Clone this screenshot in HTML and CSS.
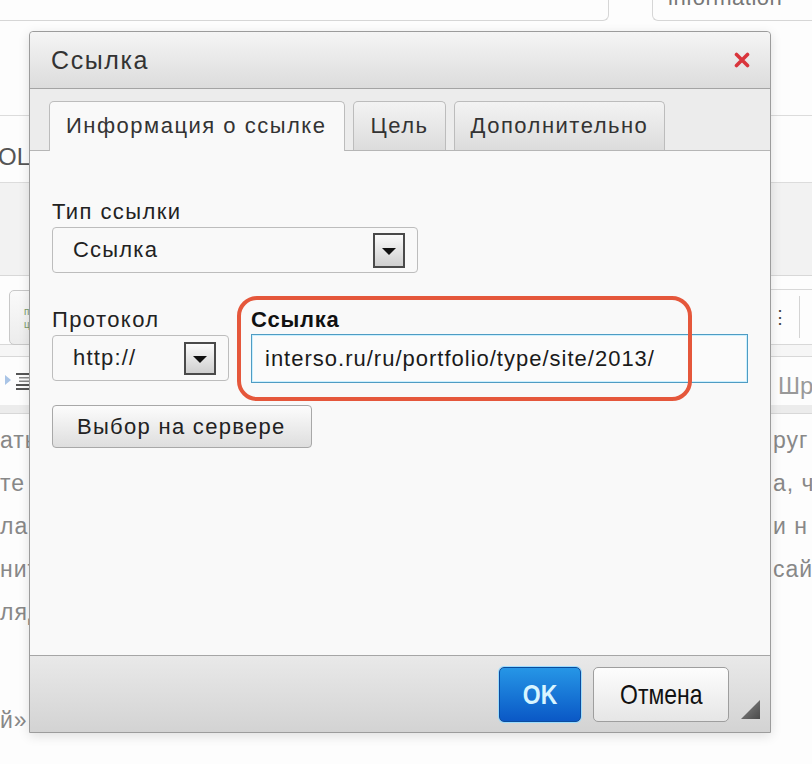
FILE: index.html
```html
<!DOCTYPE html>
<html lang="ru">
<head>
  <meta charset="UTF-8" />
  <title>Ссылка</title>
  <link rel="stylesheet" href="styles.css">
</head>
<body>

  <div class="page">
    <div class="topbar">
      <div class="top-left"></div>
      <div class="top-right"><span>information</span></div>
    </div>

    <div class="sec-title"><span>OL</span></div>
    <div class="sec-gray"></div>

    <div class="toolbar">
      <div class="tool-btn"><span>п<br>ц</span></div>
      <div class="tool-right">
        <span class="tool-dots">⋮</span>
        <span class="tool-sep"></span>
      </div>
    </div>
    <div class="sec-strip"></div>
    <div class="toolbar2">
      <svg class="tool-icon" width="26" height="22" viewBox="0 0 26 22">
        <path d="M1 5 L7 10 L1 15 Z" fill="#a9c4e6"/>
        <rect x="12" y="3" width="13" height="2" fill="#555"/>
        <rect x="15" y="7" width="10" height="1.5" fill="#888"/>
        <rect x="15" y="10.5" width="10" height="1.5" fill="#888"/>
        <rect x="12" y="14" width="13" height="2" fill="#555"/>
        <rect x="12" y="18" width="13" height="2" fill="#555"/>
      </svg>
      <span class="tool-font">Шр</span>
    </div>
    <div class="sec-band"></div>

    <div class="text">
      <div class="line"><span class="l">ать</span><span class="r">руг с</span></div>
      <div class="line"><span class="l">те</span><span class="r">а, ч</span></div>
      <div class="line"><span class="l">ла</span><span class="r"> и н</span></div>
      <div class="line"><span class="l">нит</span><span class="r">сай</span></div>
      <div class="line"><span class="l">ляд</span><span class="r"></span></div>
      <div class="line para"><span class="l">й»</span><span class="r"></span></div>
    </div>
  </div>

  <div class="dialog">
    <div class="dlg-head">
      <span class="dlg-title">Ссылка</span>
      <svg class="dlg-close" width="16" height="16" viewBox="0 0 16 16">
        <path d="M2.5 2.5 L13.5 13.5 M13.5 2.5 L2.5 13.5" stroke="#d9353c" stroke-width="3.6" stroke-linecap="round"/>
      </svg>
    </div>

    <div class="dlg-tabs">
      <div class="tab active">Информация о ссылке</div>
      <div class="tab">Цель</div>
      <div class="tab">Дополнительно</div>
    </div>

    <div class="dlg-body">
      <div class="field-label">Тип ссылки</div>
      <div class="select select-type">
        <span>Ссылка</span>
        <span class="select-arrow"></span>
      </div>

      <div class="row">
        <div class="col-proto">
          <div class="field-label">Протокол</div>
          <div class="select select-proto">
            <span>http://</span>
            <span class="select-arrow"></span>
          </div>
        </div>
        <div class="col-url">
          <div class="field-label bold">Ссылка</div>
          <div class="url-input">interso.ru/ru/portfolio/type/site/2013/</div>
          <div class="highlight"></div>
        </div>
      </div>

      <div class="btn-browse">Выбор на сервере</div>
    </div>

    <div class="dlg-foot">
      <div class="btn btn-ok"><span>OK</span></div>
      <div class="btn btn-cancel"><span>Отмена</span></div>
      <div class="grip"></div>
    </div>
  </div>

</body>
</html>
```

FILE: styles.css
```css
body {
  margin: 0;
  font-family: 'Liberation Sans', Arial, sans-serif;
  background-color: #fdfdfd;
  color: #222;
  width: 812px;
  height: 764px;
  overflow: hidden;
  position: relative;
}

/* page behind the dialog */
.page {
  width: 812px;
  color: #888;
}

.topbar {
  display: flex;
  justify-content: space-between;
  height: 21px;
}

.top-left {
  width: 609px;
  border-right: 1px solid #d6d6d6;
  border-bottom: 1px solid #d6d6d6;
  border-bottom-right-radius: 6px;
  box-sizing: border-box;
}

.top-right {
  width: 160px;
  border-left: 1px solid #d6d6d6;
  border-bottom: 1px solid #d6d6d6;
  border-bottom-left-radius: 6px;
  box-sizing: border-box;
  overflow: hidden;
  padding-left: 15px;
}

.top-right span {
  display: block;
  margin-top: -14px;
  font-size: 22px;
  line-height: 24px;
  color: #777;
  letter-spacing: 0.5px;
}

.sec-title {
  margin-top: 94px;
  border-top: 1px solid #dcdcdc;
  height: 67px;
  box-sizing: border-box;
  padding-top: 27px;
  font-size: 24px;
  color: #555;
}

.sec-title span {
  margin-left: -2px;
}

.sec-gray {
  border-top: 1px solid #dcdcdc;
  background-color: #f2f2f2;
  height: 93px;
  box-sizing: border-box;
}

.toolbar {
  border-top: 1px solid #d8d8d8;
  padding-top: 14px;
  display: flex;
  justify-content: space-between;
  height: 70px;
  box-sizing: border-box;
  border-bottom: 1px solid #d8d8d8;
}

.tool-btn {
  width: 60px;
  height: 55px;
  margin-left: 9px;
  border: 1px solid #c8c8c8;
  border-radius: 5px;
  box-sizing: border-box;
  background: linear-gradient(#fafafa, #ececec);
  font-size: 10px;
  line-height: 13px;
  color: #7a9a6a;
  padding: 14px 0 0 14px;
}

.tool-right {
  width: 41px;
  border-top: 1px solid #d8d8d8;
  margin-top: -1px;
  display: flex;
  align-items: center;
  gap: 10px;
  padding-left: 2px;
}

.tool-dots {
  font-size: 18px;
  color: #444;
}

.tool-sep {
  width: 1px;
  height: 42px;
  background-color: #d4d4d4;
}

.sec-strip {
  height: 11px;
  background-color: #f6f6f6;
  border-bottom: 1px solid #d8d8d8;
}

.toolbar2 {
  height: 48px;
  display: flex;
  align-items: center;
  justify-content: space-between;
  padding-left: 4px;
  box-sizing: border-box;
}

.tool-font {
  font-size: 24px;
  color: #999;
  width: 34px;
  white-space: nowrap;
  margin-top: 10px;
}

.sec-band {
  height: 8px;
  background-color: #ececec;
  border-bottom: 1px solid #d8d8d8;
}

.text {
  padding-top: 5px;
  font-size: 23px;
  line-height: 43px;
  letter-spacing: 1px;
  color: #888;
}

.line {
  display: flex;
  white-space: nowrap;
}

.line .l {
  width: 773px;
  flex: none;
}

.line.para {
  margin-top: 65px;
}

/* dialog */
.dialog {
  position: absolute;
  left: 29px;
  top: 31px;
  width: 740px;
  height: 700px;
  border: 1px solid #9c9c9c;
  border-radius: 4px 4px 0 0;
  background-color: #f9f9f9;
  box-shadow: 0 3px 12px rgba(0, 0, 0, 0.12);
  display: flex;
  flex-direction: column;
}

.dlg-head {
  height: 56px;
  border-bottom: 1px solid #a4a4a4;
  border-radius: 4px 4px 0 0;
  background: linear-gradient(#f5f5f5, #dcdcdc);
  display: flex;
  align-items: center;
  justify-content: space-between;
  padding: 0 20px 0 21px;
}

.dlg-title {
  font-size: 25px;
  letter-spacing: 1.6px;
  color: #333;
}

.dlg-tabs {
  background-color: #ececec;
  padding: 12px 0 0 19px;
  display: flex;
  align-items: flex-end;
  gap: 8px;
  border-bottom: 1px solid #b6b6b6;
}

.tab {
  height: 48px;
  line-height: 48px;
  border: 1px solid #bcbcbc;
  border-bottom: none;
  border-radius: 5px 5px 0 0;
  padding: 0 16px;
  background: linear-gradient(#f3f3f3, #dcdcdc);
  font-size: 22px;
  letter-spacing: 1.5px;
  color: #333;
}

.tab.active {
  height: 49px;
  margin-bottom: -1px;
  background: #f9f9f9;
  padding-right: 18px;
}

.dlg-body {
  flex: 1;
  padding: 49px 22px 0 22px;
}

.field-label {
  font-size: 22px;
  line-height: 24px;
  letter-spacing: 1.4px;
  color: #222;
  margin-bottom: 3px;
}

.field-label.bold {
  font-weight: bold;
  color: #111;
  letter-spacing: 0.8px;
}

.select {
  height: 46px;
  box-sizing: border-box;
  border: 1px solid #bdbdbd;
  border-radius: 4px;
  background-color: #f9f9f9;
  display: flex;
  align-items: center;
  justify-content: space-between;
  padding: 0 12px 0 20px;
  font-size: 22px;
  letter-spacing: 1.2px;
  color: #222;
}

.select-type {
  width: 366px;
}

.select-proto {
  width: 177px;
}

.select-arrow {
  width: 32px;
  height: 35px;
  box-sizing: border-box;
  border: 2px solid #4a4a4a;
  background: linear-gradient(#fbfbfb, #cfcfcf);
  position: relative;
}

.select-arrow::after {
  content: '';
  position: absolute;
  left: 7px;
  top: 13px;
  border-left: 7px solid transparent;
  border-right: 7px solid transparent;
  border-top: 7px solid #111;
}

.select-proto .select-arrow {
  height: 33px;
}

.select-proto .select-arrow::after {
  top: 12px;
}

.row {
  display: flex;
  gap: 22px;
  margin-top: 35px;
}

.col-url {
  flex: 1;
  position: relative;
}

.url-input {
  height: 49px;
  margin-top: -1px;
  box-sizing: border-box;
  border: 1px solid #4f9cc3;
  box-shadow: inset 0 0 0 1px #cbf0ff;
  background-color: #fbfbfb;
  padding-left: 13px;
  font-size: 22px;
  line-height: 47px;
  letter-spacing: 1px;
  color: #1a1a1a;
}

.highlight {
  position: absolute;
  left: -14px;
  top: -12px;
  width: 455px;
  height: 105px;
  box-sizing: border-box;
  border: 4px solid #e5573b;
  border-radius: 20px;
}

.btn-browse {
  display: inline-block;
  margin-top: 22px;
  height: 43px;
  line-height: 41px;
  box-sizing: border-box;
  padding: 0 25px 0 24px;
  border: 1px solid #a8a8a8;
  border-radius: 4px;
  background: linear-gradient(#fcfcfc, #dedede);
  font-size: 22px;
  letter-spacing: 1.3px;
  color: #222;
}

.dlg-foot {
  height: 77px;
  box-sizing: border-box;
  border-top: 1px solid #a6a6a6;
  background: linear-gradient(#e9e9e9, #d3d3d3);
  display: flex;
  justify-content: flex-end;
  align-items: flex-start;
  gap: 12px;
  padding: 11px 41px 0 0;
  position: relative;
}

.btn {
  height: 55px;
  box-sizing: border-box;
  border-radius: 5px;
  display: flex;
  align-items: center;
  justify-content: center;
}

.btn span {
  display: inline-block;
  font-size: 28px;
  transform: scaleX(0.82);
}

.btn-ok {
  width: 82px;
  border: 1px solid #0c4c9c;
  background: linear-gradient(#2696e6, #0a58c6);
  box-shadow: 0 0 0 1px #9bdcff;
  color: #d8f5ff;
  font-weight: bold;
}

.btn-cancel {
  width: 136px;
  border: 1px solid #9e9e9e;
  background: linear-gradient(#fdfdfd, #e6e6e6);
  color: #111;
}

.grip {
  position: absolute;
  right: 10px;
  bottom: 13px;
  width: 19px;
  height: 19px;
  background: linear-gradient(135deg, #8a8a8a, #4a4a4a);
  clip-path: polygon(100% 0, 100% 100%, 0 100%);
}
```
